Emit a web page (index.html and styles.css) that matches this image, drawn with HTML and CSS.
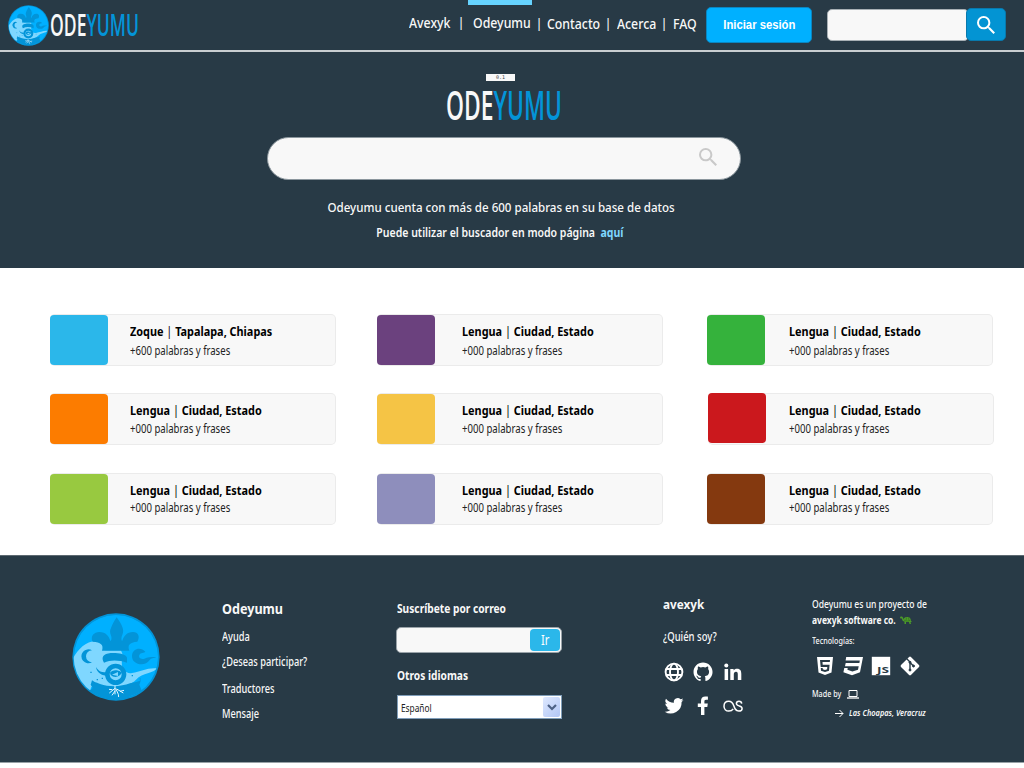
FILE: index.html
```html
<!DOCTYPE html>
<html lang="es">
<head>
<meta charset="utf-8">
<title>Odeyumu</title>
<link rel="stylesheet" href="styles.css">
</head>
<body>
<svg class="defs" aria-hidden="true">
  <defs>
    <clipPath id="disc"><circle cx="168" cy="170" r="127"/></clipPath>
    <symbol id="emblem" viewBox="36 38 264 264">
      <circle cx="168" cy="170" r="131" fill="#0394d8"/>
      <g clip-path="url(#disc)">
        <circle cx="168" cy="170" r="126" fill="#00b0ff"/>
        <path fill="#7fd7ff" d="M30 190C45 160 70 122 108 122c20 0 32 16 28 28h46c8 10 6 22 4 32-4 20 10 40 30 36 26-4 44-16 74-14-8 16-42 12-62 34-14 14-34 22-60 22-30 0-50-8-74 0l-5 14-60-30z"/>
        <path fill="#0394d8" d="M126 151c6-18-4-26-28-27-8-16 4-29 20-29 20 0 28 12 34 28 9-16-8-22 1-40 5-13 9-20 17-32 8 12 14 19 18 32 6 18-8 24-2 40 6-16 14-28 33-28 16 0 22 14 13 29-24 2-30 10-24 27z"/>
        <path fill="#0394d8" d="M132 187c-10-16-2-27 20-29 20-1 46 2 49 14v15c-24-8-48-10-69 0z"/>
        <path fill="#0394d8" d="M96 150a21 21 0 1 0 0 36 15.500 15.500 0 1 1 0-36z"/>
        <path fill="#0394d8" d="M256 154c-12-14-38-12-40 12-1 28 40 34 53 13 8-8 15-4 19-8-12-2-20-1-28 1-14 8-26 2-22-8 3-9 15-5 18-10z"/>
        <path fill="#0394d8" d="M96 240c10 8 16 7 24 11 30 10 64 8 90-2 10-4 18-1 33-10l-5 14 8 20-80 34-78-34 10-10-6-10z"/>
        <path fill="#0394d8" d="M108 200c8 12 14 16 30 16v10c-18-2-28-12-30-26z"/>
        <path fill="none" stroke="#0394d8" stroke-width="4" d="M91 216h4m15 22h4m11-4h4m86-8h4m20 10h3"/>
        <circle cx="167" cy="222" r="25" fill="#7fd7ff" stroke="#0394d8" stroke-width="14"/>
        <path fill="#0394d8" d="M150 217c6-9 22-10 32-3l4 1c-4 14-22 20-34 9z"/>
        <path fill="#7fd7ff" d="M156 223l18-8v12z"/>
      </g>
      <path fill="none" stroke="#e5f7ff" stroke-width="3" d="M165 256v26m0-18l-17 14m17-6l-9 13m11-21l8 18 1 8m-6-24l20 12m-10-5 12-3m-35-2-10-1"/>
    </symbol>
    <symbol id="magnifier" viewBox="3 3 17.5 17.5">
      <path fill="currentColor" d="M15.5 14h-.79l-.28-.27A6.471 6.471 0 0 0 16 9.5 6.5 6.5 0 1 0 9.5 16c1.61 0 3.09-.59 4.23-1.57l.27.28v.79l5 4.99L20.49 19l-4.99-5zm-6 0C7.01 14 5 11.99 5 9.5S7.01 5 9.5 5 14 7.01 14 9.5 11.99 14 9.5 14z"/>
    </symbol>
  </defs>
</svg>

<header class="topbar">
  <a class="brand">
    <svg class="brand-emblem"><use href="#emblem"/></svg>
    <svg class="brand-word" viewBox="0 0 114 30"><text x="-1" y="29" textLength="116" lengthAdjust="spacingAndGlyphs" fill="#f8f8f8">ODE<tspan fill="#0394d8">YUMU</tspan></text></svg>
  </a>
  <nav class="nav">
    <a class="nav-a"><span>Avexyk</span></a><i class="up">|</i>
    <a class="nav-b active"><span>Odeyumu</span></a><i>|</i>
    <a class="nav-c"><span>Contacto</span></a><i>|</i>
    <a class="nav-d"><span>Acerca</span></a><i>|</i>
    <a class="nav-e"><span>FAQ</span></a>
  </nav>
  <button class="login"><span>Iniciar sesión</span></button>
  <div class="top-search"><div class="top-field"></div><button class="top-go"><svg><use href="#magnifier"/></svg></button></div>
</header>

<section class="hero">
  <div class="version">0.1</div>
  <svg class="hero-word" viewBox="0 0 114 30"><text x="-1" y="29" textLength="116" lengthAdjust="spacingAndGlyphs" fill="#f8f8f8">ODE<tspan fill="#0394d8">YUMU</tspan></text></svg>
  <div class="hero-search"><svg><use href="#magnifier"/></svg></div>
  <p class="lead"><span>Odeyumu cuenta con más de 600 palabras en su base de datos</span></p>
  <p class="hint"><span>Puede utilizar el buscador en modo página &nbsp;<a>aquí</a></span></p>
</section>

<main class="cards">
  <article class="card first"><b class="swatch sky"></b><div class="info"><h3>Zoque <i>|</i> Tapalapa, Chiapas</h3><p>+600 palabras y frases</p></div></article>
  <article class="card wide first"><b class="swatch purple"></b><div class="info"><h3>Lengua <i>|</i> Ciudad, Estado</h3><p>+000 palabras y frases</p></div></article>
  <article class="card mid first"><b class="swatch green"></b><div class="info"><h3>Lengua <i>|</i> Ciudad, Estado</h3><p>+000 palabras y frases</p></div></article>
  <article class="card"><b class="swatch orange"></b><div class="info"><h3>Lengua <i>|</i> Ciudad, Estado</h3><p>+000 palabras y frases</p></div></article>
  <article class="card wide"><b class="swatch yellow"></b><div class="info"><h3>Lengua <i>|</i> Ciudad, Estado</h3><p>+000 palabras y frases</p></div></article>
  <article class="card mid shifted"><b class="swatch red"></b><div class="info"><h3>Lengua <i>|</i> Ciudad, Estado</h3><p>+000 palabras y frases</p></div></article>
  <article class="card last"><b class="swatch lime"></b><div class="info"><h3>Lengua <i>|</i> Ciudad, Estado</h3><p>+000 palabras y frases</p></div></article>
  <article class="card wide last"><b class="swatch lilac"></b><div class="info"><h3>Lengua <i>|</i> Ciudad, Estado</h3><p>+000 palabras y frases</p></div></article>
  <article class="card mid last"><b class="swatch brown"></b><div class="info"><h3>Lengua <i>|</i> Ciudad, Estado</h3><p>+000 palabras y frases</p></div></article>
</main>

<footer class="footer">
  <svg class="foot-emblem"><use href="#emblem"/></svg>
  <div class="col links">
    <h4>Odeyumu</h4>
    <a>Ayuda</a><a>¿Deseas participar?</a><a class="lower">Traductores</a><a>Mensaje</a>
  </div>
  <div class="col subscribe">
    <h5>Suscríbete por correo</h5>
    <div class="mail"><button><span>Ir</span></button></div>
    <h5>Otros idiomas</h5>
    <div class="select"><span>Español</span><i><svg viewBox="0 0 10 7"><path d="M1 1l4 4 4-4" fill="none" stroke="#4d6185" stroke-width="2.200"/></svg></i></div>
  </div>
  <div class="col social">
    <h5>avexyk</h5>
    <a class="who">¿Quién soy?</a>
    <div class="icons">
      <svg viewBox="0 0 20 20"><g fill="none" stroke="#fff" stroke-width="1.900"><circle cx="10" cy="10" r="8.400"/><ellipse cx="10" cy="10" rx="4" ry="8.400"/><path d="M2 7h16M2 13h16"/></g></svg>
      <svg viewBox="1.500 1.500 21 21"><path fill="#fff" d="M12.026 2c-5.509 0-9.974 4.465-9.974 9.974 0 4.406 2.857 8.145 6.821 9.465.499.09.679-.217.679-.481 0-.237-.008-.865-.011-1.696-2.775.602-3.361-1.338-3.361-1.338-.452-1.152-1.107-1.459-1.107-1.459-.905-.619.069-.605.069-.605 1.002.07 1.527 1.028 1.527 1.028.89 1.524 2.336 1.084 2.902.829.091-.645.351-1.085.635-1.334-2.214-.251-4.542-1.107-4.542-4.93 0-1.087.389-1.979 1.024-2.675-.101-.253-.446-1.268.099-2.64 0 0 .837-.269 2.742 1.021a9.582 9.582 0 0 1 2.496-.336 9.554 9.554 0 0 1 2.496.336c1.906-1.291 2.742-1.021 2.742-1.021.545 1.372.203 2.387.099 2.64.64.696 1.024 1.587 1.024 2.675 0 3.833-2.33 4.675-4.552 4.922.355.308.675.916.675 1.846 0 1.334-.012 2.41-.012 2.737 0 .267.178.577.687.479C19.146 20.115 22 16.379 22 11.974 22 6.465 17.535 2 12.026 2z"/></svg>
      <svg viewBox="0 0 20 20"><g fill="#fff"><circle cx="3.300" cy="3.400" r="2"/><path d="M1.600 7h3.500v11H1.600zM7.300 7h3.300v1.500C11.300 7.300 12.500 6.700 14 6.700c3.600 0 4.300 2.300 4.300 5.300v6h-3.500v-5.300c0-1.300 0-2.900-1.800-2.900s-2.200 1.400-2.200 2.800V18H7.300z"/></g></svg>
      <svg viewBox="2 2 20 20"><path fill="#fff" d="M21.500 5.900a7.700 7.700 0 0 1-2.200.6 3.900 3.900 0 0 0 1.700-2.100 7.700 7.700 0 0 1-2.500.9 3.900 3.900 0 0 0-6.600 3.500A11 11 0 0 1 4 4.700a3.900 3.900 0 0 0 1.200 5.200 3.800 3.800 0 0 1-1.800-.5 3.900 3.900 0 0 0 3.100 3.900 3.900 3.900 0 0 1-1.700.1 3.900 3.900 0 0 0 3.600 2.700A7.800 7.800 0 0 1 2.700 17.700 11 11 0 0 0 19.600 7.900a7.900 7.900 0 0 0 1.900-2z"/></svg>
      <svg viewBox="0 0 20 20"><path fill="#fff" d="M8 19v-8H4.800V7.400H8V5c0-3 1.700-4.400 4.300-4.400 1.300 0 2.300.1 2.600.1v3.100h-1.800c-1.400 0-1.700.7-1.700 1.700v1.900h3.400l-.5 3.600h-2.900v8z"/></svg>
      <svg viewBox="0 0 20 20"><path fill="none" stroke="#fff" stroke-width="1.500" d="M10.200 12.800c-1 1.600-2.500 2.300-4.400 2.300C2.900 15.100 1 13 1 10.200 1 7.300 3 5.300 5.800 5.300c3 0 4 1.700 5 4.500 1 3 1.800 5.300 5 5.300 2.100 0 3.300-1.100 3.300-2.600 0-1.900-1.500-2.200-3-2.600-1.600-.4-2.700-.8-2.700-2.300 0-1.300 1-2.300 2.600-2.300s2.600.8 2.700 2.300"/></svg>
    </div>
  </div>
  <div class="col about">
    <p class="proj">Odeyumu es un proyecto de</p>
    <div class="co"><strong>avexyk software co.</strong><svg viewBox="0 0 24 16"><path fill="#4c9a2a" d="M0 3c0-3 5-3 6 0l1 4c1-4 4-5 8-5 5 0 7 4 7 8l2 2h-3l1 4h-3l-1-4h-6v4H9v-5C6 11 4 9 4 5H1z"/><path stroke="#2c5c21" fill="none" d="M8 8c4 3 9 3 13 0M13 3l-1 6m5-6 1 6"/></svg></div>
    <p class="small">Tecnologías:</p>
    <div class="tech">
      <svg viewBox="0 0 20 20"><path fill="#fff" fill-rule="evenodd" d="M2 1h16l-1.500 15.500L10 19l-6.500-2.500zM5 4l.7 7h6.600l-.2 2.200-2.100.7-2.200-.7-.1-1.100H5.800l.2 2.700 4 1.300 4-1.300.6-6H7.700L7.500 6h7.300L15 4z"/></svg>
      <svg viewBox="0 0 20 20"><path fill="#fff" d="M3.200 1H20l-3 15.300L9 19.200l-8.600-2.900.9-4.300h3.400l-.3 1.800 5 1.800 5.600-1.800.7-3.500H2l.7-3.400h13.700l.4-2.400H2.600z"/></svg>
      <svg viewBox="0 0 20 20"><path fill="#fff" d="M.8.8h18.400v18.400H.8z"/><text class="js" x="6" y="17.300" textLength="12" lengthAdjust="spacingAndGlyphs">JS</text></svg>
      <svg viewBox="0 0 20 20"><rect x="3" y="3" width="14" height="14" rx="1.300" fill="#fff" transform="rotate(45 10 10)"/><g stroke="#283a46" fill="#283a46"><path d="M6.500 2.500 10 6v8M10 6.500l4 4" fill="none" stroke-width="1.400"/><circle cx="10" cy="6.300" r="1"/><circle cx="10" cy="14" r="1"/><circle cx="13.500" cy="10" r="1"/></g></svg>
    </div>
    <div class="made"><span class="small">Made by</span><svg viewBox="0 0 12 9"><path fill="none" stroke="#fff" d="M2 .5h8v6H2z"/><path fill="none" stroke="#fff" stroke-width="1.300" d="M0 8h12"/></svg></div>
    <div class="place"><svg viewBox="0 0 9 9"><path fill="none" stroke="#fff" d="M0 4.500h8M4.500 1 8 4.500 4.500 8"/></svg><em>Las Choapas, Veracruz</em></div>
  </div>
</footer>
</body>
</html>
```

FILE: styles.css
```css
* { box-sizing: border-box; margin: 0; padding: 0; }
body { width: 1024px; background: #fff; color: #f8f8f8; font-family: "Noto Sans", "Open Sans", sans-serif; }
svg { display: block; flex: none; }
button { border: 0; font-family: inherit; color: #fff; }
.defs { width: 0; height: 0; position: absolute; }

.topbar { display: flex; height: 52px; background: #283a46; border-bottom: 2px solid #c9ced1; }
.brand { display: flex; width: 409px; padding: 5px 0 0 8px; }
.brand-emblem { width: 41px; height: 41px; }
.brand-word { width: 89px; height: 23px; margin: 9px 0 0 1px; }
.brand-word text, .hero-word text { font: 600 39px "Open Sans", sans-serif; }
.brand-word, .hero-word { overflow: visible; }
.nav { display: flex; width: 297px; font-size: 14px; font-weight: 500; line-height: 18px; padding-top: 14px; }
.nav a, .nav i { flex: none; white-space: nowrap; }
.nav i { font-style: normal; font-size: 12px; width: 8px; text-align: center; padding-top: 1px; }
.nav .up { padding-top: 0; }
.nav span { display: inline-block; transform: scaleX(.88); transform-origin: left; }
.nav-a { width: 48px; }
.nav-b { width: 64px; padding-left: 5px; margin: 0 3px 0 3px; }
.nav .active { margin-top: -14px; padding-top: 9px; border-top: 5px solid #66d3ff; height: 32px; }
.nav-c { width: 57px; margin-left: 4px; padding-top: 1px; }
.nav-d { width: 43px; margin-left: 5px; padding-top: 1px; }
.nav-e { margin-left: 5px; padding-top: 1px; }
.login { width: 106px; height: 36px; margin: 7px 15px 0 0; background: #00b0ff; border: 1px solid #0a86c1; border-radius: 5px; font: bold 12px "Liberation Sans", sans-serif; }
.login span { display: inline-block; transform: scaleX(.94); }
.top-search { display: flex; margin-top: 8px; width: 180px; }
.top-field { width: 142px; height: 32px; margin: 1px -3px 0 0; background: #f8f8f8; border: 1px solid #a8b0b5; border-radius: 5px; }
.top-go { width: 40px; height: 33px; background: #0394d3; border: 1px solid #0879ad; border-radius: 5px; display: flex; justify-content: center; align-items: center; padding-right: 1px; }
.top-go svg { width: 18px; height: 18px; }

.hero { height: 216px; background: #283a46; display: flex; flex-direction: column; align-items: center; padding: 22px 21px 0 0; }
.version { width: 29px; height: 7px; background: #f8f8f8; color: #444; font: 5px/7px "DejaVu Sans Mono", monospace; text-align: center; margin-left: -2px; }
.hero-word { width: 114px; height: 30px; margin-top: 10px; margin-left: 4px; }
.hero-search { width: 474px; height: 43px; margin: 16px 0 0 5px; background: #f8f8f8; border: 1px solid #8b969d; border-radius: 22px; display: flex; justify-content: flex-end; padding: 10px 23px; color: #c9c9c9; }
.hero-search svg { width: 18px; height: 18px; }
.lead, .hint { white-space: nowrap; line-height: 18px; }
.lead { font-size: 13px; font-weight: 500; margin-top: 18px; }
.hint { font-size: 12px; font-weight: 600; margin: 8px 0 0 -4px; }
.lead span, .hint span { display: inline-block; transform: scaleX(.89); }
.hint span { transform: scaleX(.877); }
.hint a { color: #7fd7ff; font-weight: bold; }

.cards { height: 287px; display: grid; grid-template-columns: 327px 330px 286px; grid-template-rows: 79px 80px 51px; padding: 47px 0 0 50px; color: #000; }
.card { display: flex; width: 286px; height: 51px; margin-top: -1px; background: #f8f8f8; border: 1px solid #ebebeb; border-left: 0; height: 52px; border-radius: 5px; }
.shifted { margin-left: 1px; }
.swatch { width: 58px; height: 50px; border-radius: 4px; flex: none; }
.shifted .swatch { margin-top: -1px; }
.info { padding: 8px 0 0 22px; white-space: nowrap; }
.wide .info { padding-left: 27px; }
.mid .info { padding-left: 24px; }
.shifted .info { padding-left: 23px; }
.info h3 { font-size: 12.500px; line-height: 18px; transform: scaleX(.87); transform-origin: left; }
.info h3 i { font-style: normal; font-weight: normal; }
.info p { font-size: 12px; line-height: 18px; transform: scaleX(.8); transform-origin: left; color: #222; }
.first .info p { padding-top: 1px; }
.last .info p { margin-top: -1px; }
.sky { background: #2bb7ea; }
.purple { background: #6b417e; }
.green { background: #35b23c; }
.orange { background: #fc7c00; }
.yellow { background: #f5c445; }
.red { background: #cb181d; }
.lime { background: #98c940; }
.lilac { background: #8e8ebc; }
.brown { background: #84390f; }

.footer { height: 208px; background: #283a46; border-top: 1px solid #5d6971; border-bottom: 1px solid #98a1a6; display: flex; padding: 0 0 0 72px; }
.foot-emblem { width: 88px; height: 88px; margin: 57px 62px 0 0; }
.col { flex: none; white-space: nowrap; }
.col h4, .col h5, .col a, .col p, .col strong, .col em, .small { display: block; line-height: 16px; transform-origin: left; }
.links { width: 174px; padding-top: 44px; }
.links h4 { font-size: 15px; transform: scaleX(.84); margin-bottom: 13px; }
.links a, .who { font-size: 12px; transform: scaleX(.77); margin-bottom: 9px; font-weight: 500; }
.links .lower { margin-top: 11px; }
.subscribe { width: 267px; padding: 45px 0 0 0; }
.subscribe h5 { font-size: 12px; margin-left: 1px; transform: scaleX(.85); }
.mail { width: 166px; height: 26px; margin: 10px 0 15px; background: #f8f8f8; border: 1px solid #9aa3a9; border-radius: 5px; display: flex; justify-content: flex-end; padding: 1px 1px; }
.mail button { width: 30px; height: 22px; background: #2bb7ea; border-radius: 4px; font-size: 14px; line-height: 22px; }
.mail span { display: inline-block; transform: scaleX(.8); }
.select { width: 165px; height: 24px; margin: 11px 0 0 1px; background: #fff; border: 1px solid #7f9db9; color: #222; display: flex; justify-content: space-between; font-size: 10px; line-height: 22px; padding: 1px; }
.select span { margin-left: 2px; transform: scaleX(.83); transform-origin: left; }
.select i { width: 17px; height: 20px; background: linear-gradient(135deg, #dfe9ff, #b1c6f5); border-radius: 2px; display: grid; place-items: center; }
.select svg { width: 10px; height: 7px; }
.social { width: 149px; padding-top: 40px; }
.social h5 { font-size: 13px; transform: scaleX(.9); margin-bottom: 17px; }
.social .who { margin-bottom: 17px; transform: scaleX(.79); }
.icons { display: grid; grid-template-columns: repeat(3, 20px); column-gap: 9.500px; row-gap: 14px; margin-left: .5px; }
.icons svg, .tech svg { width: 20px; height: 20px; }
.about { padding-top: 40px; }
.about .proj { font-size: 10.500px; font-weight: 500; transform: scaleX(.815); }
.co { display: flex; }
.co strong { font-size: 11px; transform: scaleX(.77); width: 88px; }
.co svg { width: 12px; height: 8px; margin-top: 4px; }
.small { font-size: 9px; font-weight: 500; transform: scaleX(.8); }
.about p.small { margin-top: 5px; }
.tech { display: flex; gap: 8.400px; margin: 7px 0 10px 2.500px; }
.js { font: bold 9.500px "Noto Sans", sans-serif; fill: #283a46; }
.made { display: flex; align-items: center; }
.made .small { width: 35px; }
.made svg { width: 12px; height: 9px; }
.place { display: flex; align-items: center; margin: 3px 0 0 23px; }
.place svg { width: 9px; height: 9px; margin-right: 5px; }
.place em { font-size: 9px; font-weight: 600; transform: scaleX(.825); }
```
